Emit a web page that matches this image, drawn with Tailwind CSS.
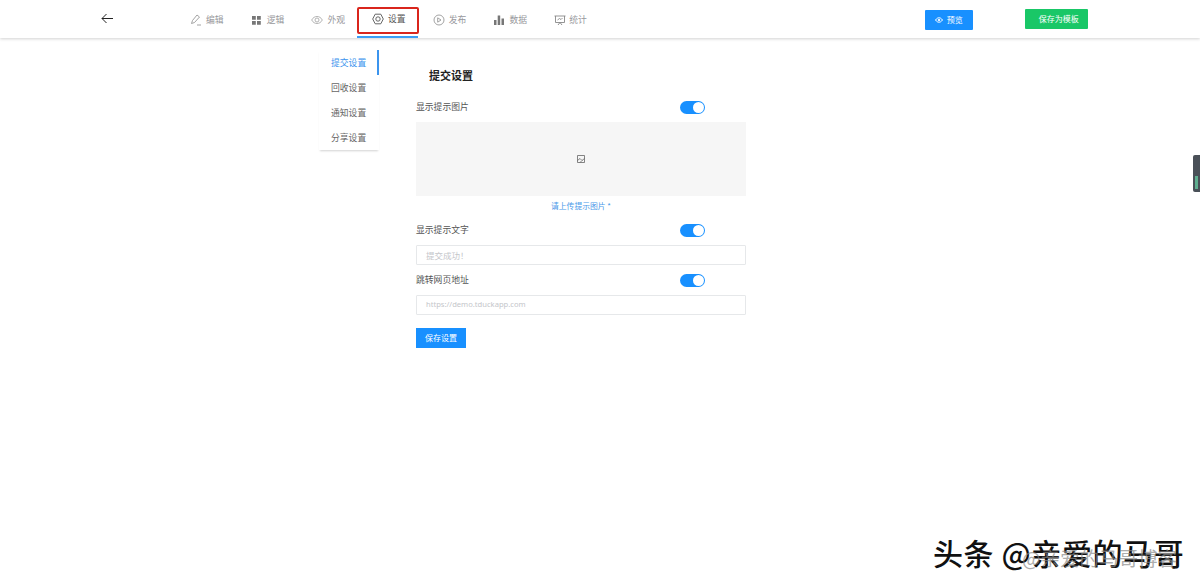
<!doctype html>
<html lang="zh"><head><meta charset="utf-8"><script src="https://cdn.jsdelivr.net/npm/@tailwindcss/browser@4"></script></head>
<body class="bg-white overflow-hidden font-['Noto_Sans_CJK_SC','Noto_Sans',sans-serif]">
<div class="relative w-[1200px] h-[586px] overflow-hidden">
<header class="h-[38px] flex items-center shadow-[0_1px_3px_rgba(0,0,0,0.18)] relative">
  <svg class="ml-[101px] w-[13px] h-[11px] mb-[1px]" viewBox="0 0 13 11" fill="none" stroke="#222" stroke-width="1"><path d="M12 5.500H1M5.500 1 1 5.500 5.500 10"/></svg>
  <nav class="ml-[61px] flex h-full text-[8.8px] text-[#98989c]">
    <a class="w-[60.7px] pl-[15px] flex items-center gap-[4px] pt-[2px]"><svg class="w-[12px] h-[12px]" viewBox="0 0 12 12" fill="none" stroke="#999" stroke-width=".9"><path d="M1.500 9.500 2.500 6.500 7 1 9.500 3 4.500 8.500Z M7 11H11"/></svg>编辑</a>
    <a class="w-[60.7px] pl-[15px] flex items-center gap-[5px] pt-[2px]"><svg class="w-[11px] h-[11px]" viewBox="0 0 11 11" fill="#777"><path d="M1 1h3.800v3.800H1zM6 1h3.800v3.800H6zM1 6h3.800v3.800H1zM6 6h3.800v3.800H6z"/></svg>逻辑</a>
    <a class="w-[60.7px] pl-[15px] flex items-center gap-[4px] pt-[2px]"><svg class="w-[12px] h-[12px]" viewBox="0 0 12 12" fill="none" stroke="#aaa" stroke-width=".9"><path d="M.7 6C2 3.500 4 2.500 6 2.500S10 3.500 11.300 6C10 8.500 8 9.500 6 9.500S2 8.500.7 6Z"/><circle cx="6" cy="6" r="2"/></svg>外观</a>
    <a class="w-[60.7px] pl-[15px] flex items-center gap-[4px] pt-[2px] text-[#555] border-b-2 border-[#3b9cf5]"><svg class="w-[12px] h-[12px]" viewBox="0 0 12 12" fill="none" stroke="#555" stroke-width=".9"><path d="M3.200 1.200H8.800L11.300 6 8.800 10.800H3.200L.7 6Z" stroke-linejoin="round"/><circle cx="6" cy="6" r="2.200"/></svg>设置</a>
    <a class="w-[60.7px] pl-[15px] flex items-center gap-[4px] pt-[2px]"><svg class="w-[12px] h-[12px]" viewBox="0 0 12 12" fill="none" stroke="#999" stroke-width=".9"><circle cx="6" cy="6" r="5"/><path d="M4.700 3.800 8 6 4.700 8.200Z"/></svg>发布</a>
    <a class="w-[60.7px] pl-[15px] flex items-center gap-[4px] pt-[2px]"><svg class="w-[12px] h-[12px]" viewBox="0 0 12 12" fill="#777"><path d="M1 6h2.500v5H1zM4.700 1.500h2.500V11H4.700zM8.500 4.500H11V11H8.500z"/></svg>数据</a>
    <a class="w-[60.7px] pl-[15px] flex items-center gap-[3px] pt-[2px]"><svg class="w-[12px] h-[12px]" viewBox="0 0 12 12" fill="none" stroke="#888" stroke-width=".9"><path d="M.5 2H11.500M1.500 2V8.500H10.500V2M3.500 6 5.500 4.500 7 5.500 8.500 4M4 11 6 8.500 8 11"/></svg>统计</a>
  </nav>
  <button class="ml-[325px] w-[48px] h-[20px] bg-[#1890ff] text-white text-[8px] flex items-center justify-center gap-[4px] rounded-[1px] mb-[-2px]"><svg class="w-[8px] h-[6px]" viewBox="0 0 8 6" fill="none" stroke="white"><path d="M.5 3C2 1 3 .8 4 .8S6 1 7.500 3C6 5 5 5.200 4 5.200S2 5 .5 3Z"/><circle cx="4" cy="3" r=".8" fill="white"/></svg>预览</button>
  <button class="ml-[52px] w-[63px] h-[20px] bg-[#19c767] text-white text-[8px] flex items-center justify-center pl-[5px] rounded-[1px]">保存为模板</button>
</header>
<div class="absolute left-[357px] top-[7px] w-[62px] h-[27px] border-2 border-[#d9251c] rounded-[2px]"></div>

<main class="flex">
  <aside class="ml-[319px] mt-[12px] w-[60px] h-[100px] shadow-[0_2px_2px_-1px_rgba(0,0,0,0.18)] text-[8.8px] text-[#666]">
    <div class="h-[25px] pl-[12px] flex items-center text-[#3b94ee] border-r-2 border-[#3b94ee]">提交设置</div>
    <div class="h-[25px] pl-[12px] flex items-center">回收设置</div>
    <div class="h-[25px] pl-[12px] flex items-center">通知设置</div>
    <div class="h-[25px] pl-[12px] flex items-center">分享设置</div>
  </aside>
  <section class="ml-[37px] w-[330px] mt-[28px]">
    <h2 class="ml-[13px] h-[18px] leading-[18px] text-[11px] font-bold text-[#222]">提交设置</h2>
    <div class="mt-[16px] h-[14px] flex items-center justify-between pr-[41px] text-[8.8px] text-[#555]"><span>显示提示图片</span><span class="w-[25px] h-[13px] rounded-full bg-[#1890ff] flex items-center justify-end pr-[1px]"><span class="w-[11px] h-[11px] rounded-full bg-white"></span></span></div>
    <div class="mt-[8px] h-[74px] bg-[#f6f6f6] flex items-center justify-center"><svg class="w-[8px] h-[8px]" viewBox="0 0 8 8" fill="none" stroke="#666" stroke-width=".8"><path d="M.5.500h7v7h-7zM.5 5.500 3 3.500 5 5.500 7.500 3.500M3 7.500 5 5.500"/></svg></div>
    <p class="mt-[4px] h-[12px] leading-[12px] text-center text-[7.8px] text-[#4a98e8]">请上传提示图片 *</p>
    <div class="mt-[11px] h-[14px] flex items-center justify-between pr-[41px] text-[8.8px] text-[#555]"><span>显示提示文字</span><span class="w-[25px] h-[13px] rounded-full bg-[#1890ff] flex items-center justify-end pr-[1px]"><span class="w-[11px] h-[11px] rounded-full bg-white"></span></span></div>
    <div class="mt-[8px] h-[20px] border border-[#e6e8ea] rounded-[1px] pl-[9px] flex items-center text-[8.5px] text-[#c4c6ca]">提交成功！</div>
    <div class="mt-[8px] h-[14px] flex items-center justify-between pr-[41px] text-[8.8px] text-[#555]"><span>跳转网页地址</span><span class="w-[25px] h-[13px] rounded-full bg-[#1890ff] flex items-center justify-end pr-[1px]"><span class="w-[11px] h-[11px] rounded-full bg-white"></span></span></div>
    <div class="mt-[8px] h-[20px] border border-[#e6e8ea] rounded-[1px] pl-[9px] flex items-center text-[7.6px] text-[#c4c6ca] font-['Noto_Sans',sans-serif]">https://demo.tduckapp.com</div>
    <button class="mt-[13px] block w-[50px] h-[20px] bg-[#1890ff] text-white text-[8px]">保存设置</button>
  </section>
</main>

<div class="absolute right-0 top-[155px] w-[7px] h-[37px] bg-[#4a5058] rounded-l-[2px] flex items-end justify-center pb-[3px]"><span class="w-[3px] h-[13px] bg-[#5fae90]"></span></div>
<div class="absolute left-[933px] top-[532px] text-[30px] leading-[40px] font-medium tracking-[0.6px] text-[#111] whitespace-nowrap [text-shadow:1px_1px_0_#fff,-1px_-1px_0_#fff]">头条 @亲爱的马哥</div>
<div class="absolute left-[1022px] top-[549px] text-[19.5px] leading-[18px] text-[#888]/70 whitespace-nowrap">@亲爱的马哥博客</div>
</div>
</body></html>
